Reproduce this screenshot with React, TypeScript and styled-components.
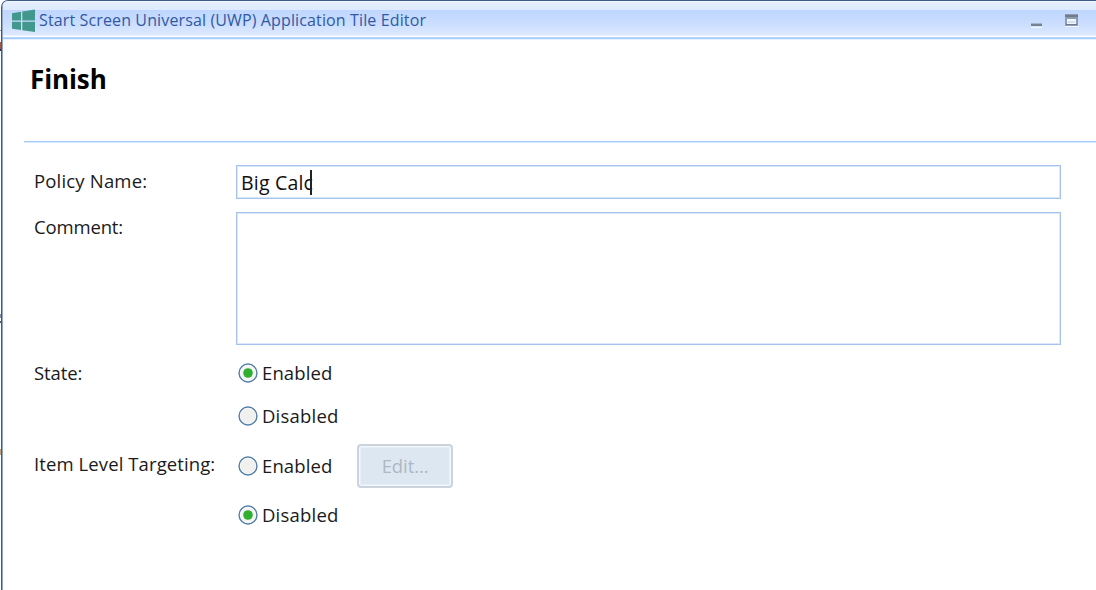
import React from "react";
import styled, { createGlobalStyle } from "styled-components";

const Global = createGlobalStyle`
  * { box-sizing: border-box; }
  body { margin: 0; overflow: hidden; background: #fff; }
`;

const Desktop = styled.div`
  position: relative;
  width: 1096px;
  height: 590px;
  overflow: hidden;
  background: #fff;
  font-family: "Open Sans", "Noto Sans", sans-serif;
  font-size: 18.5px;
  color: #1a1a1a;
`;

const Window = styled.div`
  display: flex;
  flex-direction: column;
  margin-left: 1px;
  width: 1110px;
  height: 610px;
  background: #fff;
  border: solid #3c5a87;
  border-width: 1.5px 0 0 1px;
  border-top-left-radius: 7px;
  box-shadow: inset 1px 0 0 #8fa9cc;
  overflow: hidden;
`;

const Behind = styled.div<{ $y: number; $h: number; $c: string }>`
  position: absolute;
  left: 0;
  top: ${(p) => p.$y}px;
  width: 1px;
  height: ${(p) => p.$h}px;
  background: ${(p) => p.$c};
`;

const TitleBar = styled.header`
  display: flex;
  align-items: flex-start;
  flex: none;
  height: 39px;
  margin-left: 1px;
  padding: 8px 0 0 9px;
  background: linear-gradient(#f4f8ff 0, #e3edff 2px, #e0eaff 9px, #bfd6ff 9.5px, #c8dcff 20px, #dce8ff 34px, #fff 35px, #fff 36px, #c5ddfc 36px, #a9cdfa 37px, #a9cdfa 38px, #e6f1ff 38px);
`;

const Text = styled.span<{ $track?: number }>`
  display: block;
  line-height: 24px;
  white-space: pre;
  letter-spacing: ${(p) => p.$track ?? 0}px;
`;

const Title = styled(Text)`
  margin: 0 0 0 4px;
  font-size: 16px;
  line-height: 22px;
  color: #3159a3;
`;

const Controls = styled.div`
  margin-left: auto;
  margin-right: 32px;
`;

const Heading = styled.h1`
  margin: 21px 0 0 28px;
  height: 36px;
  font-size: 26px;
  line-height: 36px;
  font-weight: 700;
  letter-spacing: -0.1px;
  color: #000;
`;

const Rule = styled.div`
  flex: none;
  margin: 44px 0 22px 22px;
  height: 2px;
  background: linear-gradient(#a9cdfa 50%, #d7e8fe 50%);
`;

const Row = styled.div<{ $height: number; $gap?: number; $top?: number }>`
  display: grid;
  grid-template-columns: 202px 825px;
  flex: none;
  height: ${(p) => p.$height}px;
  margin: 0 0 ${(p) => p.$gap ?? 0}px 32px;
  & > ${Text} { margin-top: ${(p) => p.$top ?? 0}px; }
`;

const Box = styled.div`
  display: flex;
  align-items: flex-start;
  height: 100%;
  padding: 5px 0 0 4px;
  border: 1px solid #a6c3ee;
  box-shadow: inset 0 0 0 1px #dbe8fb;
  font-size: 19.5px;
  color: #111;
`;

const Caret = styled.i`
  width: 1.5px;
  height: 25px;
  margin: -1px 0 0 -3px;
  background: #222;
`;

const Choice = styled.div`
  display: flex;
  align-items: center;
  height: 44px;
`;

const Dial = styled.svg`
  display: block;
  margin: 0 4px 0 2px;
`;

const EditButton = styled.button`
  display: flex;
  justify-content: center;
  align-items: center;
  width: 96px;
  height: 44px;
  margin: 0 0 0 24.6px;
  padding: 0;
  border: 2px solid #cbd3de;
  border-radius: 4px;
  background: #dde7f1;
  box-shadow: inset 0 0 0 1.5px #f3f6fa;
  font: inherit;
  color: #aeb7c2;
`;

const Radio = ({ on, label, track }: { on?: boolean; label: string; track: number }) => (
  <>
    <Dial width="20" height="20" viewBox="0 0 20 20">
      <circle cx="10" cy="10" r="8.9" fill={on ? "#f5f6f4" : "#f0f0ee"} stroke="#527da9" strokeWidth="1.5" />
      <circle cx="10" cy="10" r="7.8" fill="none" stroke="#fff" strokeWidth="0.8" opacity=".7" />
      {on && <circle cx="10" cy="10" r="4.8" fill="#2fae2f" />}
    </Dial>
    <Text $track={track}>{label}</Text>
  </>
);

export default function App() {
  return (
    <Desktop>
      <Global />
      <Window>
        <TitleBar>
          <svg width="23" height="24" viewBox="0 0 23 24" fill="#43988d">
            <path d="M0 4.2 9 2.8V11.4H0zM10.3 2.6 23 .5V11.4H10.3zM0 12.8H9V21L0 19.8zM10.3 12.8H23V23L10.3 21.2z" />
          </svg>
          <Title $track={0.13}>Start Screen Universal (UWP) Application Tile Editor</Title>
          <Controls>
            <svg width="54" height="20" viewBox="0 0 54 20" shapeRendering="crispEdges">
              <path d="M6 18h11v1H6zM40 17h14v1H40z" fill="#f1f7ff" />
              <path d="M6 14h11v1H6z" fill="#a7b4c8" />
              <path d="M6 15h11v2H6z" fill="#778291" />
              <path d="M40 5h13v12H40z" fill="#8b9db5" />
              <path d="M40 6h13v2H40zM41 15h11v1H41z" fill="#737c86" />
              <path d="M42 10h9v5h-9z" fill="#f2f6fc" />
              <path d="M43 12h7v2h-7z" fill="#d4e1f5" />
            </svg>
          </Controls>
        </TitleBar>
        <Heading>Finish</Heading>
        <Rule />
        <Row $height={34} $gap={13} $top={4}>
          <Text $track={0.18}>Policy Name:</Text>
          <Box>
            <Text $track={0.2}>Big Calc</Text>
            <Caret />
          </Box>
        </Row>
        <Row $height={133} $gap={6} $top={3}>
          <Text $track={-0.15}>Comment:</Text>
          <Box />
        </Row>
        <Row $height={43} $top={10}>
          <Text $track={-0.1}>State:</Text>
          <Choice><Radio on label="Enabled" track={0.12} /></Choice>
        </Row>
        <Row $height={44} $gap={6}>
          <span />
          <Choice><Radio label="Disabled" track={0.2} /></Choice>
        </Row>
        <Row $height={44} $gap={5} $top={8}>
          <Text $track={0.1}>Item Level Targeting:</Text>
          <Choice>
            <Radio label="Enabled" track={0.12} />
            <EditButton disabled><Text $track={-0.1}>Edit...</Text></EditButton>
          </Choice>
        </Row>
        <Row $height={44}>
          <span />
          <Choice><Radio on label="Disabled" track={0.2} /></Choice>
        </Row>
      </Window>
      <Behind $y={30} $h={1} $c="#8d9db1" />
      <Behind $y={42} $h={7} $c="#a35c43" />
      <Behind $y={49} $h={2} $c="#25304a" />
      <Behind $y={314} $h={4} $c="#8a8fa0" />
      <Behind $y={321} $h={2} $c="#55586a" />
      <Behind $y={449} $h={6} $c="#c2a27c" />
    </Desktop>
  );
}
